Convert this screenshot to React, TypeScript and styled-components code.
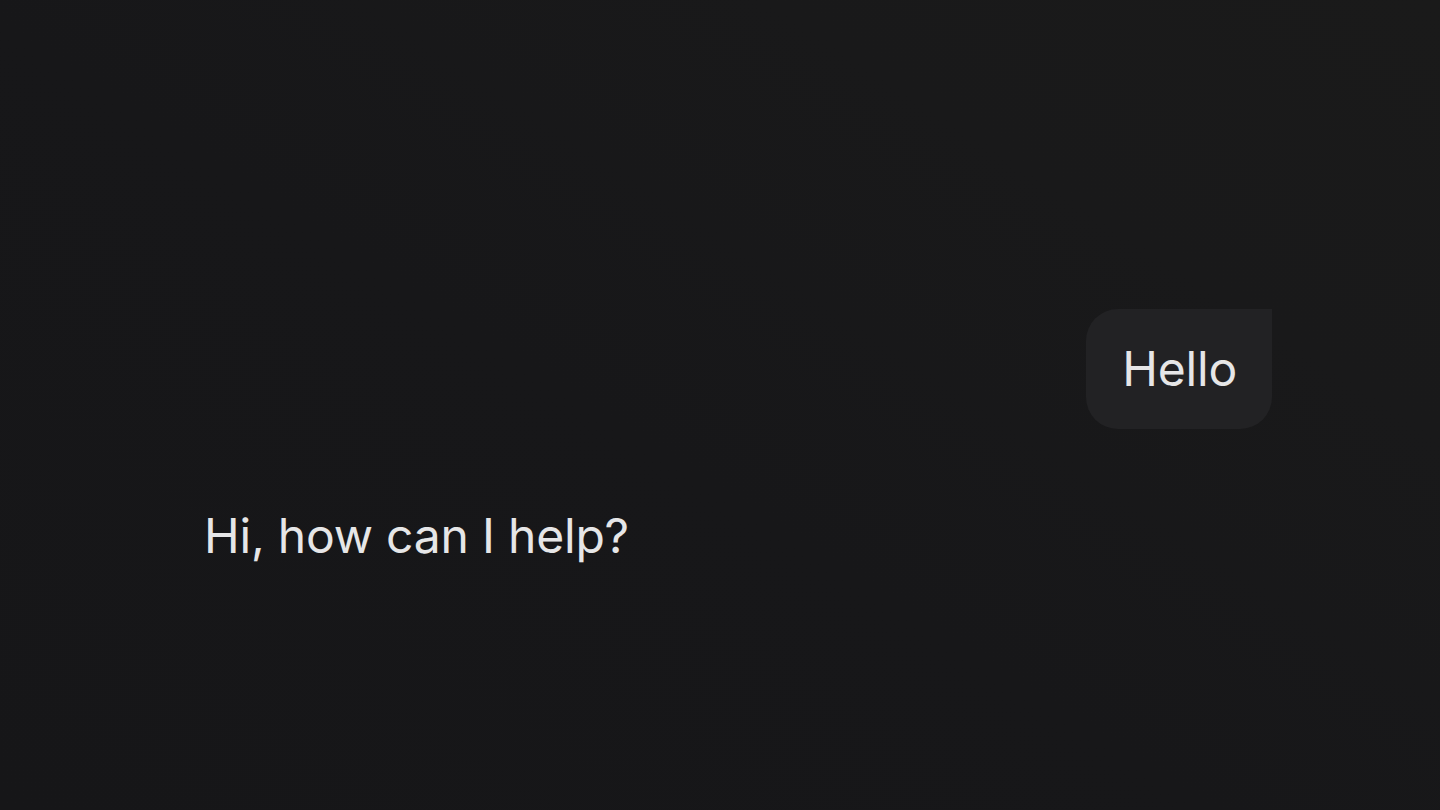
import React from "react";
import styled, { createGlobalStyle } from "styled-components";

const GlobalStyle = createGlobalStyle`
  html, body {
    margin: 0;
    padding: 0;
    height: 100%;
  }
  body {
    font-family: Inter, "Noto Sans", sans-serif;
    background: #171719;
  }
  #root {
    min-height: 100vh;
  }
`;

const Page = styled.main`
  box-sizing: border-box;
  min-height: 100vh;
  width: 100%;
  background: linear-gradient(33deg, #161618 0%, #171719 45%, #19191a 75%, #1a1a1a 100%);
  padding: 309px 168px 0 204px;
`;

const Thread = styled.div`
  display: flex;
  flex-direction: column;
  gap: 71px;
`;

const Row = styled.div<{ $align: "start" | "end" }>`
  display: flex;
  justify-content: ${(p) => (p.$align === "end" ? "flex-end" : "flex-start")};
`;

const UserBubble = styled.div`
  background: #222224;
  color: #e6e6e7;
  font-size: 48px;
  line-height: 56px;
  padding: 32px 35px 32px 36px;
  border-radius: 32px 0 32px 32px;
  letter-spacing: -0.2px;
`;

const AssistantText = styled.div`
  color: #e6e6e7;
  font-size: 48px;
  line-height: 72px;
  letter-spacing: -0.2px;
`;

export default function App() {
  return (
    <>
      <GlobalStyle />
      <Page>
        <Thread>
          <Row $align="end">
            <UserBubble>Hello</UserBubble>
          </Row>
          <Row $align="start">
            <AssistantText>Hi, how can I help?</AssistantText>
          </Row>
        </Thread>
      </Page>
    </>
  );
}
